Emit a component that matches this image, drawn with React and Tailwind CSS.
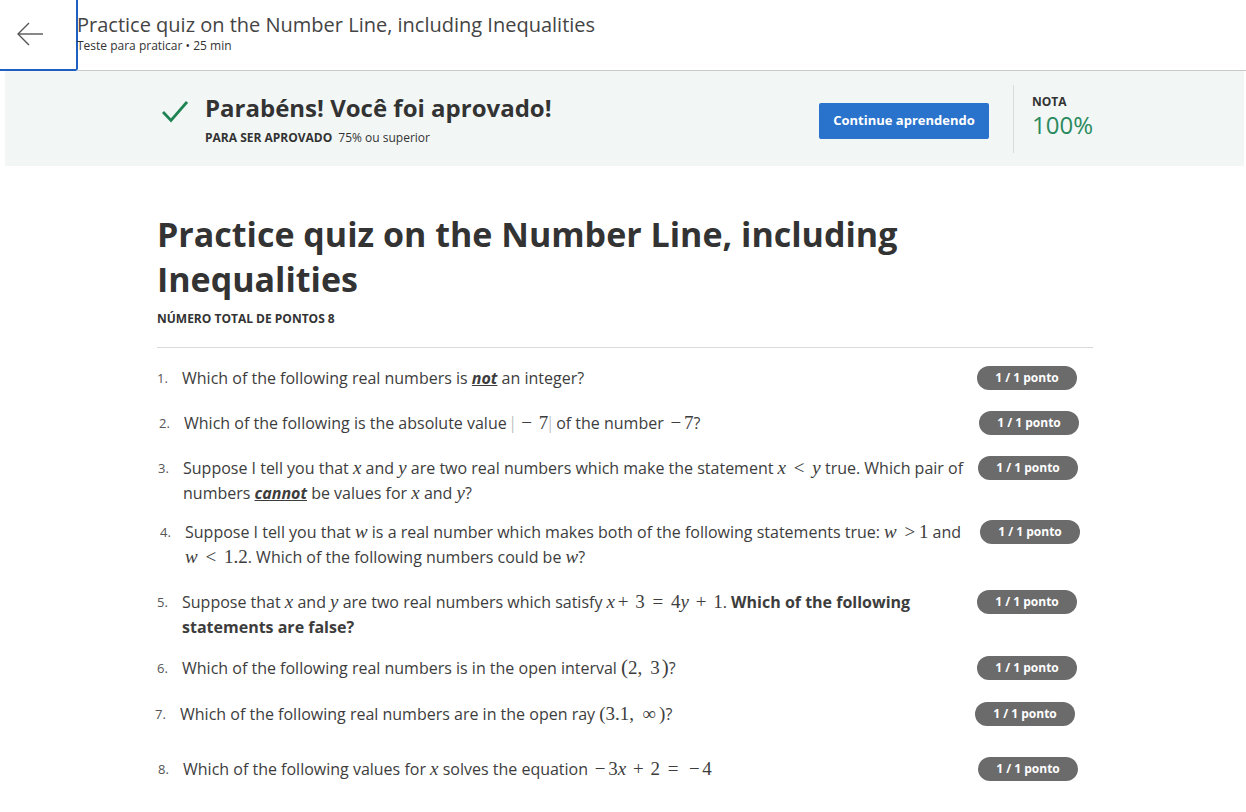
import React from "react";

const V = ({ children }) => (
  <span className="font-['Liberation_Serif',serif] italic text-[19px] leading-none">{children}</span>
);
const M = ({ children }) => (
  <span className="font-['Liberation_Serif',serif] text-[19px] leading-none">{children}</span>
);
const Bin = ({ children }) => (
  <span className="inline-block w-[16px] text-center font-['Liberation_Serif',serif] text-[19px] leading-none">{children}</span>
);
const Rel = ({ children }) => (
  <span className="inline-block w-[18px] text-center font-['Liberation_Serif',serif] text-[19px] leading-none">{children}</span>
);

const Badge = () => (
  <div className="w-[100px] h-[24px] shrink-0 rounded-full bg-[#6b6b6b] text-white text-[12px] font-bold flex items-center justify-center">
    1 / 1 ponto
  </div>
);

const Row = ({ n, cls, children }) => (
  <div className={"flex items-start w-[920px] " + cls}>
    <div className="w-[25px] shrink-0 text-[13px] leading-[25px] text-[#555]">{n}.</div>
    <div className="flex-1 text-[16px] leading-[25px] text-[#3d3d3d] pr-[4px]">{children}</div>
    <Badge />
  </div>
);

export default function App() {
  return (
    <div className="w-[1246px] min-h-[812px] bg-white font-['Open_Sans',sans-serif] text-[#333]">
      {/* Header */}
      <div className="flex h-[71px]">
        <div className="w-[78px] h-[71px] shrink-0 border-r-2 border-b-2 border-[#1f5fbf] rounded-br-[3px] pl-[16px] pt-[22px]">
          <svg width="28" height="24" viewBox="0 0 28 24" fill="none" stroke="#555" strokeWidth="1.4">
            <path d="M2 12 H27" />
            <path d="M13 1 L2 12 L13 23" />
          </svg>
        </div>
        <div className="flex-1 h-[71px] border-b border-[#c9c9c9] pt-[12px]">
          <div className="-ml-px text-[20px] leading-[26px] text-[#444]">
            Practice quiz on the Number Line, including Inequalities
          </div>
          <div className="-ml-px text-[12px] leading-[14px] mt-[1px] text-[#333]">Teste para praticar • 25 min</div>
        </div>
      </div>

      {/* Banner */}
      <div className="ml-[5px] mr-[2px] h-[95px] bg-[#f2f7f6]">
        <div className="ml-[152px] w-[936px] h-full flex items-start">
          <div className="w-[662px] pl-[5px] pt-[22px] flex items-start">
            <svg width="26" height="23" viewBox="0 0 26 23" fill="none" stroke="#1f8354" strokeWidth="2.8" className="mt-[7px]">
              <path d="M1 12 L9 20.5 L25 2" />
            </svg>
            <div className="ml-[17px]">
              <div className="text-[24px] leading-[30px] font-bold text-[#333]">Parabéns! Você foi aprovado!</div>
              <div className="mt-[7px] text-[12px] leading-[16px] text-[#333]">
                <span className="font-bold">PARA SER APROVADO</span>
                <span className="ml-[6px]">75% ou superior</span>
              </div>
            </div>
          </div>
          <button className="mt-[32px] w-[170px] h-[36px] rounded-[2px] bg-[#2a73cc] text-white text-[13px] font-bold">
            Continue aprendendo
          </button>
          <div className="ml-[24px] mt-[14px] w-px h-[68px] bg-[#dcdcdc]" />
          <div className="ml-[18px] pt-[23px]">
            <div className="text-[12px] leading-[16px] font-bold text-[#333]">NOTA</div>
            <div className="mt-[1px] text-[24px] leading-[28px] text-[#2a8a5e]">100%</div>
          </div>
        </div>
      </div>

      {/* Main */}
      <div className="ml-[157px] w-[936px] pb-[20px]">
        <h1 className="mt-[46px] max-w-[800px] text-[34px] leading-[45px] font-bold text-[#333]">
          Practice quiz on the Number Line, including Inequalities
        </h1>
        <div className="mt-[9px] text-[12px] leading-[16px] font-bold text-[#333]">NÚMERO TOTAL DE PONTOS 8</div>
        <div className="mt-[20px] border-t border-[#d9d9d9]" />

        <Row n="1" cls="mt-[18px]">
          Which of the following real numbers is{" "}
          <span className="font-bold italic underline">not</span> an integer?
        </Row>
        <Row n="2" cls="mt-[20px] ml-[2px]">
          Which of the following is the absolute value{" "}
          <M>
            <span className="text-[#bbb]">|</span>
          </M>
          <span className="inline-block w-[24px] text-center font-['Liberation_Serif',serif] text-[19px] leading-none">−</span>
          <M>
            7<span className="text-[#bbb]">|</span>
          </M>{" "}
          of the number <Bin>−</Bin>
          <M>7</M>?
        </Row>
        <Row n="3" cls="mt-[20px] ml-[1px]">
          Suppose I tell you that <V>x</V> and <V>y</V> are two real numbers which make the statement{" "}
          <V>x</V> <Rel>&lt;</Rel> <V>y</V> true. Which pair of numbers{" "}
          <span className="font-bold italic underline">cannot</span> be values for <V>x</V> and <V>y</V>?
        </Row>
        <Row n="4" cls="mt-[14px] ml-[3px]">
          Suppose I tell you that <V>w</V> is a real number which makes both of the following statements true:{" "}
          <V>w</V> <Rel>&gt;</Rel>
          <M>1</M> and{" "}
          <span className="whitespace-nowrap">
            <V>w</V> <Rel>&lt;</Rel> <M>1.2</M>
          </span>
          . Which of the following numbers could be <V>w</V>?
        </Row>
        <Row n="5" cls="mt-[20px]">
          Suppose that <V>x</V> and <V>y</V> are two real numbers which satisfy <V>x</V>
          <Bin>+</Bin> <M>3</M> <Rel>=</Rel> <M>4</M>
          <V>y</V> <Bin>+</Bin> <M>1</M>.{" "}
          <span className="font-bold">Which of the following statements are false?</span>
        </Row>
        <Row n="6" cls="mt-[16px]">
          Which of the following real numbers is in the open interval{" "}
          <M>
            <span className="text-[21px]">(</span>2,<span className="ml-[8px]">3</span>
            <span className="text-[21px] ml-[2px]">)</span>
          </M>
          ?
        </Row>
        <Row n="7" cls="mt-[21px] -ml-[2px]">
          Which of the following real numbers are in the open ray{" "}
          <M>
            (3.1,<span className="ml-[5px] inline-block w-[20px] text-center">∞</span>)
          </M>
          ?
        </Row>
        <Row n="8" cls="mt-[30px] ml-[1px]">
          Which of the following values for <V>x</V> solves the equation <Bin>−</Bin>
          <M>3</M>
          <V>x</V> <Bin>+</Bin> <M>2</M> <Rel>=</Rel> <Bin>−</Bin>
          <M>4</M>
        </Row>
      </div>
    </div>
  );
}
